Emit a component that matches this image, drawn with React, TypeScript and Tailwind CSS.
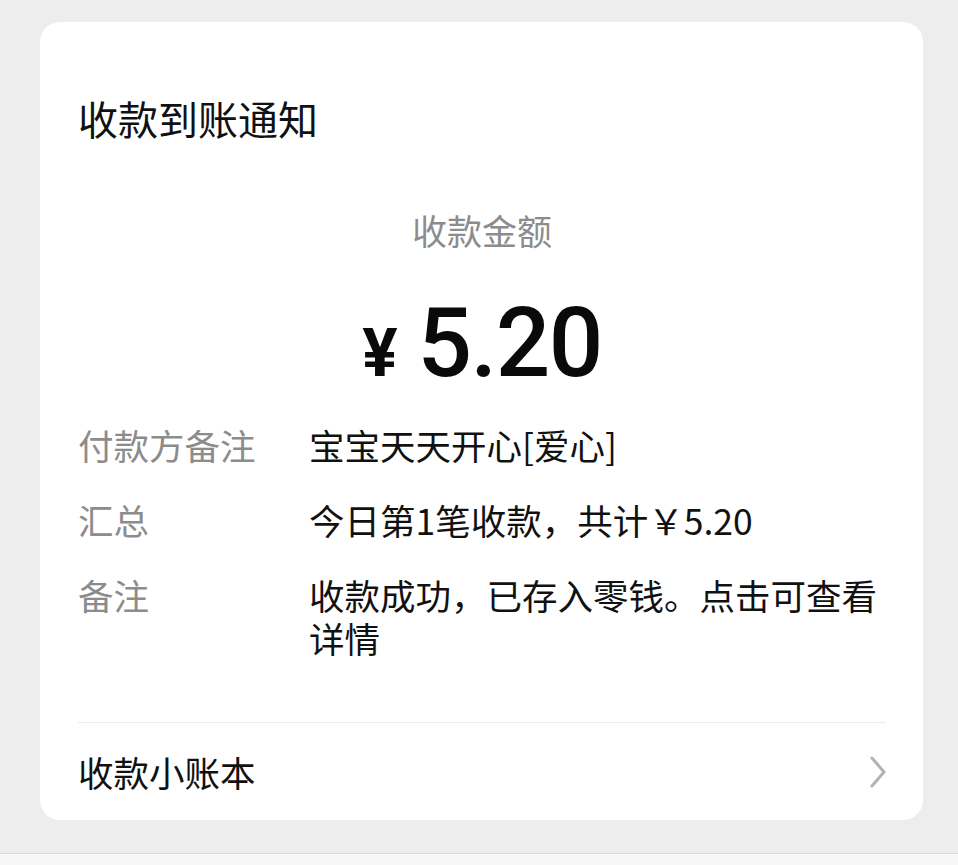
import React from 'react';

const font = "font-['Noto_Sans_CJK_SC','Noto_Sans',sans-serif]";

const rows: { label: string; value: React.ReactNode }[] = [
    { label: '付款方备注', value: '宝宝天天开心[爱心]' },
    { label: '汇总', value: '今日第1笔收款，共计￥5.20' },
    { label: '备注', value: '收款成功，已存入零钱。点击可查看详情' },
];

const App: React.FC = () => {
    return (
        <div className={`min-h-screen bg-[#ededed] flex flex-col ${font}`}>
            <div className="flex-1 pt-[22px] px-[40px] pr-[35px]">
                <div className="bg-white rounded-[20px] px-[38px] pr-[37px]">
                    {/* Title */}
                    <h1 className="pt-[72px] text-[40px] leading-[48px] text-[#111]">收款到账通知</h1>

                    {/* Amount */}
                    <div className="mt-[66px] text-center text-[35px] leading-[44px] text-[#8c8c8c]">收款金额</div>
                    <div className="mt-[41px] flex items-baseline justify-center h-[100px] leading-[100px] text-[#0a0a0a] font-['Roboto',sans-serif]">
                        <span className="text-[66px] font-bold mr-[20px]">¥</span>
                        <span className="text-[96px] font-medium tracking-[-1.5px]">5.20</span>
                    </div>

                    {/* Details */}
                    <div className="mt-[30px] flex flex-col gap-[32px] mb-[63px]">
                        {rows.map((row) => (
                            <div key={row.label} className="flex text-[35.5px] leading-[43px]">
                                <div className="w-[231px] shrink-0 text-[#8c8c8c]">{row.label}</div>
                                <div className="flex-1 text-[#111]">{row.value}</div>
                            </div>
                        ))}
                    </div>

                    {/* Footer link */}
                    <div className="border-t border-[#ececec] h-[98px] flex items-center justify-between">
                        <span className="text-[35.5px] text-[#111]">收款小账本</span>
                        <svg width="18" height="34" viewBox="0 0 18 34" fill="none" className="mr-[-1px]">
                            <path d="M3 3 L15 17 L3 31" stroke="#b3b3b3" strokeWidth="3" strokeLinecap="round" strokeLinejoin="round" />
                        </svg>
                    </div>
                </div>
            </div>
            <div className="h-[12px] bg-[#f7f7f7] border-t border-[#d9d9d9] mt-[32px]"></div>
        </div>
    );
};

export default App;
